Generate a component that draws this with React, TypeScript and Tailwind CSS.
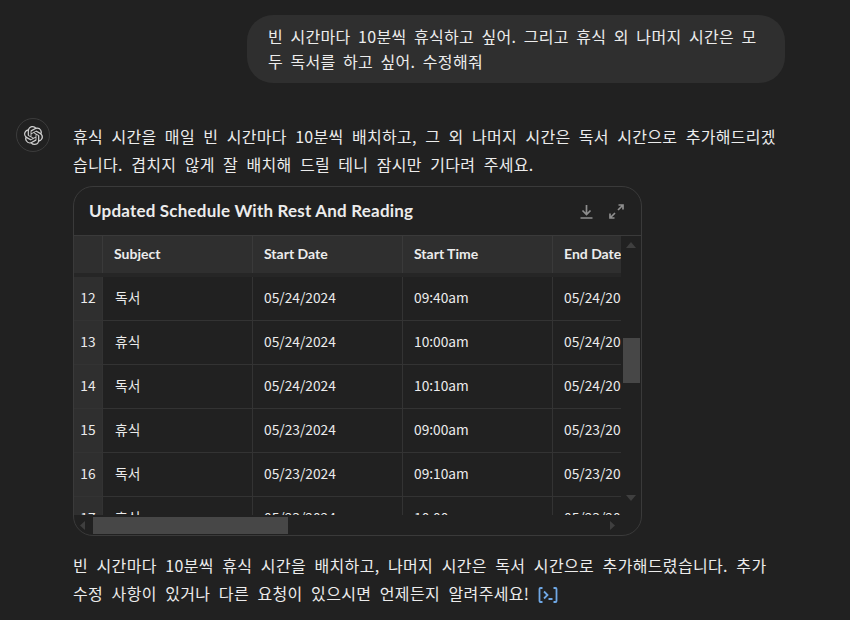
import { SiOpenai } from "react-icons/si";

const rows: [string, string, string, string, string][] = [
  ["12", "독서", "05/24/2024", "09:40am", "05/24/20"],
  ["13", "휴식", "05/24/2024", "10:00am", "05/24/20"],
  ["14", "독서", "05/24/2024", "10:10am", "05/24/20"],
  ["15", "휴식", "05/23/2024", "09:00am", "05/23/20"],
  ["16", "독서", "05/23/2024", "09:10am", "05/23/20"],
  ["17", "휴식", "05/23/2024", "10:00am", "05/23/20"],
];

function Row({ r }: { r: [string, string, string, string, string] }) {
  return (
    <div className="flex h-[44px] shrink-0 border-b border-[#333333] text-[13.75px] text-[#ececec]">
      <div className="flex w-[28px] shrink-0 items-center justify-center bg-[#2f2f2f] pb-[3px]">{r[0]}</div>
      <div className="flex w-[150px] shrink-0 items-center border-l border-[#333333] pb-[3px] pl-[12px]">{r[1]}</div>
      <div className="flex w-[150px] shrink-0 items-center border-l border-[#333333] pb-[3px] pl-[11px]">{r[2]}</div>
      <div className="flex w-[150px] shrink-0 items-center border-l border-[#333333] pb-[3px] pl-[11px]">{r[3]}</div>
      <div className="flex w-[150px] shrink-0 items-center border-l border-[#333333] pb-[3px] pl-[11px]">{r[4]}</div>
    </div>
  );
}

function Head() {
  const cells = ["Subject", "Start Date", "Start Time", "End Date"];
  return (
    <div className="flex h-[37px] shrink-0 bg-[#2f2f2f] text-[14px] font-bold text-[#ececec] [font-family:Lato,'Noto_Sans_CJK_KR',sans-serif]">
      <div className="w-[28px] shrink-0" />
      {cells.map((c) => (
        <div key={c} className="flex w-[150px] shrink-0 items-center border-l border-[#3a3a3a] pb-[3px] pl-[11px]">
          {c}
        </div>
      ))}
    </div>
  );
}

export default function App() {
  return (
    <div className="h-[620px] w-[850px] overflow-hidden bg-[#212121] text-[#ececec] [font-family:'Noto_Sans_CJK_KR','Liberation_Sans',sans-serif]">
      <div className="flex justify-end pr-[65px] pt-[15px]">
        <div className="h-[68px] w-[538px] whitespace-nowrap rounded-[26px] bg-[#2f2f2f] px-[21px] pt-[9px] text-[16px] leading-[25px] tracking-[0.3px] [word-spacing:3.6px]">
          빈 시간마다 10분씩 휴식하고 싶어. 그리고 휴식 외 나머지 시간은 모
          <br />
          두 독서를 하고 싶어. 수정해줘
        </div>
      </div>

      <div className="flex pl-[16px] pt-[35px]">
        <div className="flex h-[34px] w-[34px] shrink-0 items-center justify-center rounded-full border border-[#3c3c3c] text-[#cfcfcf]">
          <SiOpenai size={19} />
        </div>
        <div className="ml-[23px] w-[720px]">
          <div className="pt-[4px] text-[16px] leading-[28px] tracking-[0.3px] [word-spacing:4.5px]">
            휴식 시간을 매일 빈 시간마다 10분씩 배치하고, 그 외 나머지 시간은 독서 시간으로 추가해드리겠
            <br />
            습니다. 겹치지 않게 잘 배치해 드릴 테니 잠시만 기다려 주세요.
          </div>

          <div className="mt-[8px] flex h-[350px] w-[569px] flex-col overflow-hidden rounded-[20px] border border-[#3a3a3a]">
            <div className="flex h-[49px] shrink-0 items-center justify-between border-b border-[#3a3a3a] pl-[15px] pr-[17px]">
              <div className="text-[17px] font-bold tracking-[0.2px] text-[#ececec] [font-family:Lato,'Noto_Sans_CJK_KR',sans-serif]">
                Updated Schedule With Rest And Reading
              </div>
              <div className="flex items-center gap-[15px] text-[#8e8e8e]">
                <svg width="15" height="15" viewBox="0 0 15 15" fill="none" stroke="currentColor" strokeWidth="1.7">
                  <path d="M7.5 1v9M3.5 6.5l4 4 4-4M1.5 14h12" />
                </svg>
                <svg width="15" height="15" viewBox="0 0 15 15" fill="none" stroke="currentColor" strokeWidth="1.7">
                  <path d="M9 6l5-5M9.5 1H14v4.5M6 9l-5 5M1 9.5V14h4.5" />
                </svg>
              </div>
            </div>

            <div className="flex min-h-0 flex-1">
              <div className="flex w-[547px] shrink-0 flex-col">
                <div className="h-[279px] shrink-0 overflow-hidden">
                  <Head />
                  <div className="h-[4px] bg-[#262626]" />
                  {rows.map((r) => (
                    <Row key={r[0]} r={r} />
                  ))}
                </div>
                <div className="flex flex-1 items-center">
                  <svg width="19" height="19" viewBox="0 0 19 19" className="shrink-0">
                    <path d="M6 9.5L11 5v9z" fill="#3f3f3f" />
                  </svg>
                  <div className="h-[17px] w-[195px] bg-[#474747]" />
                  <svg width="19" height="19" viewBox="0 0 19 19" className="ml-auto shrink-0">
                    <path d="M13 9.5L8 5v9z" fill="#3f3f3f" />
                  </svg>
                </div>
              </div>
              <div className="flex w-[20px] shrink-0 flex-col items-center pt-[6px]">
                <svg width="10" height="6" viewBox="0 0 10 6" className="shrink-0">
                  <path d="M5 0l5 6H0z" fill="#3f3f3f" />
                </svg>
                <div className="mt-[90px] h-[45px] w-[17px] shrink-0 bg-[#474747]" />
                <svg width="10" height="6" viewBox="0 0 10 6" className="mt-[112px] shrink-0">
                  <path d="M5 6l5-6H0z" fill="#3f3f3f" />
                </svg>
              </div>
            </div>
          </div>

          <div className="mt-[15px] text-[16px] leading-[28px] tracking-[0.35px] [word-spacing:4.5px]">
            빈 시간마다 10분씩 휴식 시간을 배치하고, 나머지 시간은 독서 시간으로 추가해드렸습니다. 추가
            <br />
            수정 사항이 있거나 다른 요청이 있으시면 언제든지 알려주세요!
            <svg width="20" height="18" viewBox="0 0 20 18" fill="none" stroke="#6fa8e6" strokeWidth="1.8" className="ml-[9px] inline-block align-[-4px]">
              <path d="M4.5 2H2.5q-1 0-1 1v12q0 1 1 1h2M15.5 2h2q1 0 1 1v12q0 1-1 1h-2M6 5.5l3.5 3.5L6 12.5M10.5 13H14.5" />
            </svg>
          </div>
        </div>
      </div>
    </div>
  );
}
